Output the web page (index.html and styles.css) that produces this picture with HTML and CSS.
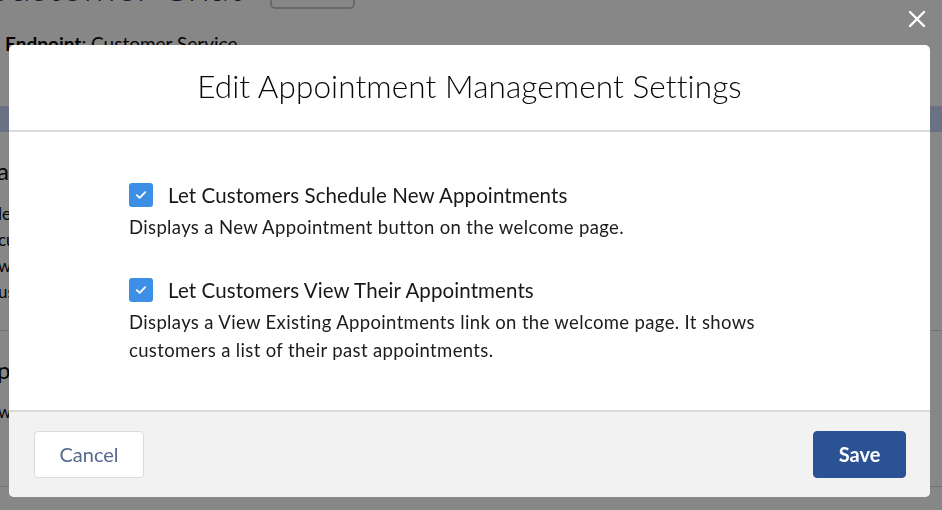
FILE: index.html
```html
<!DOCTYPE html>
<html lang="en">
<head>
<meta charset="utf-8">
<title>Edit Appointment Management Settings</title>
<link rel="stylesheet" href="styles.css">
</head>
<body>
<div class="page">
  <div class="page-head">
    <h1 class="page-title">Customer Chat</h1>
    <span class="page-btn"></span>
  </div>
  <p class="endpoint"><b>Endpoint</b>: Customer Service</p>
  <div class="band"></div>
  <section class="sec">
    <h2 class="sec-title">appointments</h2>
    <p class="sec-line">lets customers book</p>
    <p class="sec-line">customers can</p>
    <p class="sec-line">when they</p>
    <p class="sec-line">using</p>
  </section>
  <section class="sec sec2">
    <h2 class="sec-title">pre-chat</h2>
    <p class="sec-line">welcome</p>
  </section>
</div>

<div class="backdrop"></div>
<button class="close" aria-label="Close">
  <svg width="18" height="18" viewBox="0 0 18 18"><path d="M2 2 L16 16 M16 2 L2 16" stroke="#fff" stroke-width="2.4" stroke-linecap="round"/></svg>
</button>

<div class="modal">
  <header class="modal-head">
    <h2 class="modal-title">Edit Appointment Management Settings</h2>
  </header>
  <div class="modal-body">
    <div class="opt">
      <div class="opt-row">
        <span class="cb"><svg width="12" height="10" viewBox="0 0 12 10"><path d="M1.8 5.2 L4.6 7.8 L10.2 2.2" fill="none" stroke="#fff" stroke-width="1.8" stroke-linecap="round" stroke-linejoin="round"/></svg></span>
        <span class="opt-label">Let Customers Schedule New Appointments</span>
      </div>
      <p class="opt-desc">Displays a New Appointment button on the welcome page.</p>
    </div>
    <div class="opt">
      <div class="opt-row">
        <span class="cb"><svg width="12" height="10" viewBox="0 0 12 10"><path d="M1.8 5.2 L4.6 7.8 L10.2 2.2" fill="none" stroke="#fff" stroke-width="1.8" stroke-linecap="round" stroke-linejoin="round"/></svg></span>
        <span class="opt-label">Let Customers View Their Appointments</span>
      </div>
      <p class="opt-desc">Displays a View Existing Appointments link on the welcome page. It shows customers a list of their past appointments.</p>
    </div>
  </div>
  <footer class="modal-foot">
    <button class="btn btn-neutral">Cancel</button>
    <button class="btn btn-brand">Save</button>
  </footer>
</div>
</body>
</html>
```
FILE: styles.css
```css
* { box-sizing: border-box; }
html, body { margin: 0; padding: 0; }
body {
  width: 942px;
  height: 510px;
  overflow: hidden;
  background: #ffffff;
  font-family: Lato, "Open Sans", "Liberation Sans", sans-serif;
  color: #080707;
}

/* underlying page */
.page { width: 942px; height: 510px; overflow: hidden; }
.page-head {
  display: flex;
  align-items: flex-end;
  gap: 27px;
  margin-top: -40px;
  height: 49px;
}
.page-title {
  margin: 0 0 3px -18px;
  font-size: 40px;
  font-weight: 300;
  line-height: 40px;
  color: #16325c;
  white-space: nowrap;
}
.page-btn {
  display: block;
  width: 85px;
  height: 30px;
  border: 2px solid #c9c7c5;
  border-radius: 5px;
  background: #fff;
  flex: none;
}
.endpoint {
  margin: 24px 0 0 5px;
  font-size: 19px;
  line-height: 22px;
  white-space: nowrap;
}
.band {
  margin-top: 51px;
  height: 26px;
  background: #cad5f9;
}
.sec {
  padding-top: 24px;
  border-bottom: 1px solid #d8d8d8;
  height: 199px;
}
.sec-title {
  margin: 0 0 15px -3px;
  font-size: 24px;
  font-weight: 400;
  line-height: 30px;
  white-space: nowrap;
}
.sec-line {
  margin: 0 0 0 -2px;
  font-size: 17px;
  line-height: 26px;
  white-space: nowrap;
}
.sec2 { padding-top: 24px; height: 156px; }
.sec2 .sec-title { margin-bottom: 14px; }

/* overlay */
.backdrop {
  position: fixed;
  inset: 0;
  background: rgba(0, 0, 0, 0.47);
}
.close {
  position: fixed;
  top: 10px;
  left: 908px;
  width: 18px;
  height: 18px;
  padding: 0;
  border: 0;
  background: none;
  display: flex;
}

.modal {
  position: fixed;
  top: 45px;
  left: 9px;
  width: 921px;
  height: 452px;
  background: #fff;
  border-radius: 5px;
  display: flex;
  flex-direction: column;
  overflow: hidden;
}
.modal-head {
  height: 87px;
  border-bottom: 2px solid #dddbda;
  display: flex;
  align-items: center;
  justify-content: center;
  padding-bottom: 4px;
}
.modal-title {
  margin: 0;
  font-size: 31.5px;
  font-weight: 300;
  color: #080707;
  letter-spacing: 0.1px;
}
.modal-body {
  flex: 1;
  padding: 51px 0 0 120px;
  display: flex;
  flex-direction: column;
  gap: 37px;
}
.opt { width: 660px; }
.opt-row {
  display: flex;
  align-items: center;
  gap: 15px;
  height: 24px;
}
.cb {
  width: 24px;
  height: 24px;
  border-radius: 3px;
  background: #3d8fe6;
  display: flex;
  align-items: center;
  justify-content: center;
  flex: none;
}
.opt-label {
  font-size: 20.5px;
  letter-spacing: 0.1px;
  color: #16181b;
}
.opt-desc {
  margin: 6px 0 0;
  font-size: 18.5px;
  letter-spacing: 0.35px;
  line-height: 28px;
  color: #1b1c1e;
}

.modal-foot {
  height: 87px;
  border-top: 2px solid #dddbda;
  background: #f3f2f2;
  display: flex;
  align-items: center;
  justify-content: space-between;
  padding: 0 24px 0 25px;
}
.btn {
  height: 47px;
  border-radius: 4px;
  font-family: Lato, "Open Sans", "Liberation Sans", sans-serif;
  font-size: 20px;
  padding: 0 0 1px;
}
.btn-neutral {
  width: 110px;
  background: #fff;
  border: 1px solid #dddbda;
  color: #54698d;
}
.btn-brand {
  width: 93px;
  background: #2a5295;
  border: 1px solid #2a5295;
  color: #fff;
  font-weight: 700;
}
```
